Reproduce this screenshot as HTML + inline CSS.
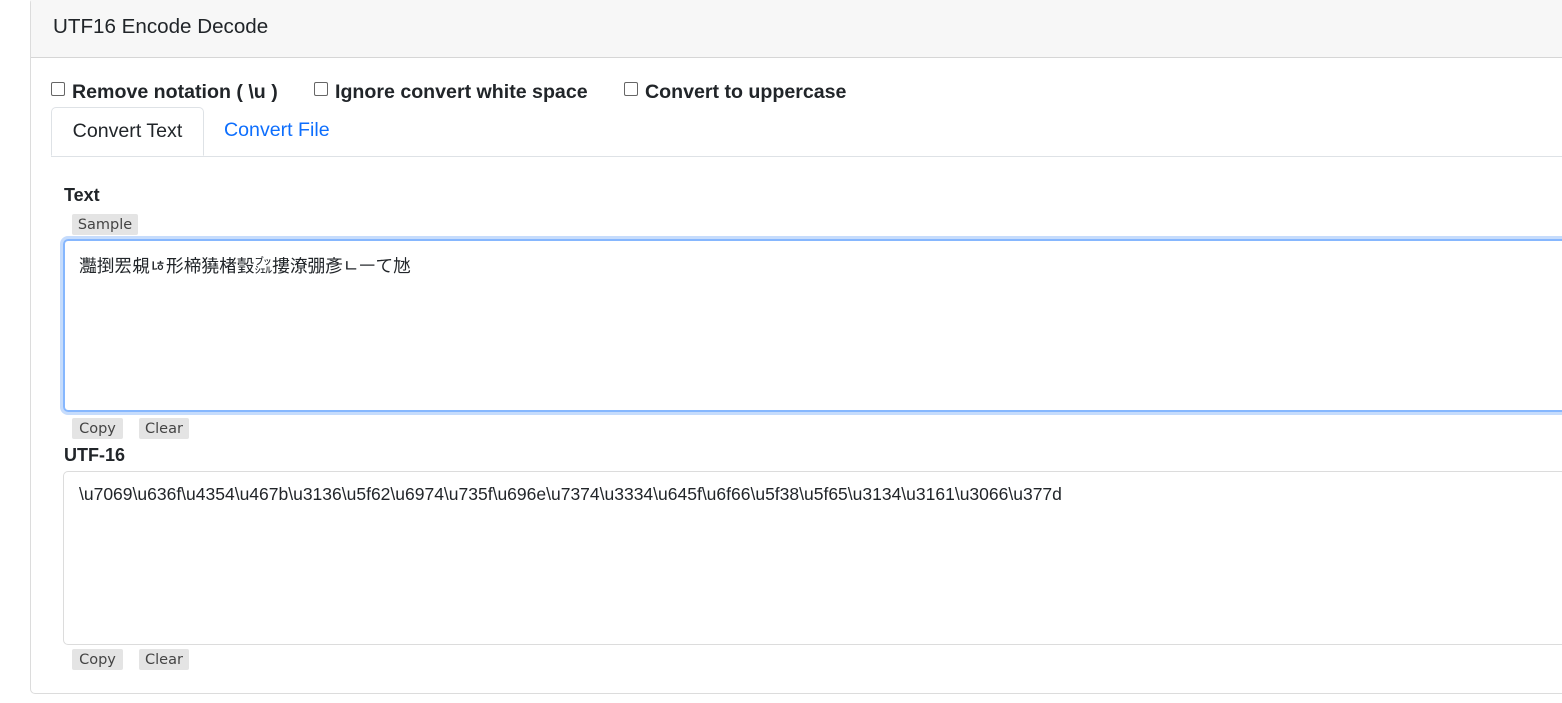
<!DOCTYPE html>
<html><head><meta charset="utf-8"><style>
body{margin:0;background:#fff;font-family:"Liberation Sans","Noto Sans CJK JP",sans-serif;color:#212529;width:1562px;height:703px;overflow:hidden;position:relative}
.card{position:absolute;left:30px;top:-2px;width:1560px;height:696px;border:1px solid #dcdcdc;border-radius:5px;box-sizing:border-box}
.hdr{height:59px;background:#f7f7f7;border-bottom:1px solid #d6d6d6;box-sizing:border-box;font-size:20.6px;padding:16px 0 0 22px}
.opts{position:absolute;top:82px;left:20px;font-weight:bold;font-size:19.6px;white-space:nowrap}
.opts label{position:absolute;top:0}
.cb{display:inline-block;width:12px;height:12px;border:1px solid #666;border-radius:2px;vertical-align:2px;margin-right:7px}
.tabs{position:absolute;top:108px;left:20px;right:0;height:49px;border-bottom:1px solid #dee2e6}
.tab{position:absolute;top:0;height:49px;box-sizing:border-box;font-size:19.6px;padding-top:12px}
.t1{left:0;width:153px;border:1px solid #dee2e6;border-bottom:1px solid #fff;border-radius:5px 5px 0 0;text-align:center;background:#fff}
.t2{left:173px;color:#0d6efd}
.lbl{position:absolute;left:33px;font-weight:bold;font-size:18px}
.btn{position:absolute;height:21px;background:#e4e4e4;border-radius:2px;font-size:14.5px;color:#444;text-align:center;line-height:23px;font-family:"DejaVu Sans",sans-serif}
.ta{position:absolute;left:32px;width:1560px;box-sizing:border-box;border:1px solid #dcdcdc;border-radius:5px;font-size:17.5px;padding:12px 15px}
.focus{border:2px solid #86b7fe;box-shadow:0 0 0 3px #c6dcfc;padding:11px 14px;font-size:17.7px}
</style></head><body>
<div class="card">
<div class="hdr">UTF16 Encode Decode</div>
<div class="opts"><label style="left:0px"><span class="cb"></span>Remove notation ( \u )</label><label style="left:263px"><span class="cb"></span>Ignore convert white space</label><label style="left:573px"><span class="cb"></span>Convert to uppercase</label></div>
<div class="tabs"><div class="tab t1">Convert Text</div><div class="tab t2">Convert File</div></div>
<div class="lbl" style="top:186px">Text</div>
<div class="btn" style="left:41px;top:215px;width:66px">Sample</div>
<div class="ta focus" style="top:240px;height:173px">灩捯䍔䙻ㄶ形楴獟楮瑴㌴摟潦弸彥ㄴㅡて㝽</div>
<div class="btn" style="left:41px;top:419px;width:51px">Copy</div>
<div class="btn" style="left:108px;top:419px;width:50px">Clear</div>
<div class="lbl" style="top:446px">UTF-16</div>
<div class="ta" style="top:472px;height:174px">\u7069\u636f\u4354\u467b\u3136\u5f62\u6974\u735f\u696e\u7374\u3334\u645f\u6f66\u5f38\u5f65\u3134\u3161\u3066\u377d</div>
<div class="btn" style="left:41px;top:650px;width:51px">Copy</div>
<div class="btn" style="left:108px;top:650px;width:50px">Clear</div>
</div>
</body></html>
